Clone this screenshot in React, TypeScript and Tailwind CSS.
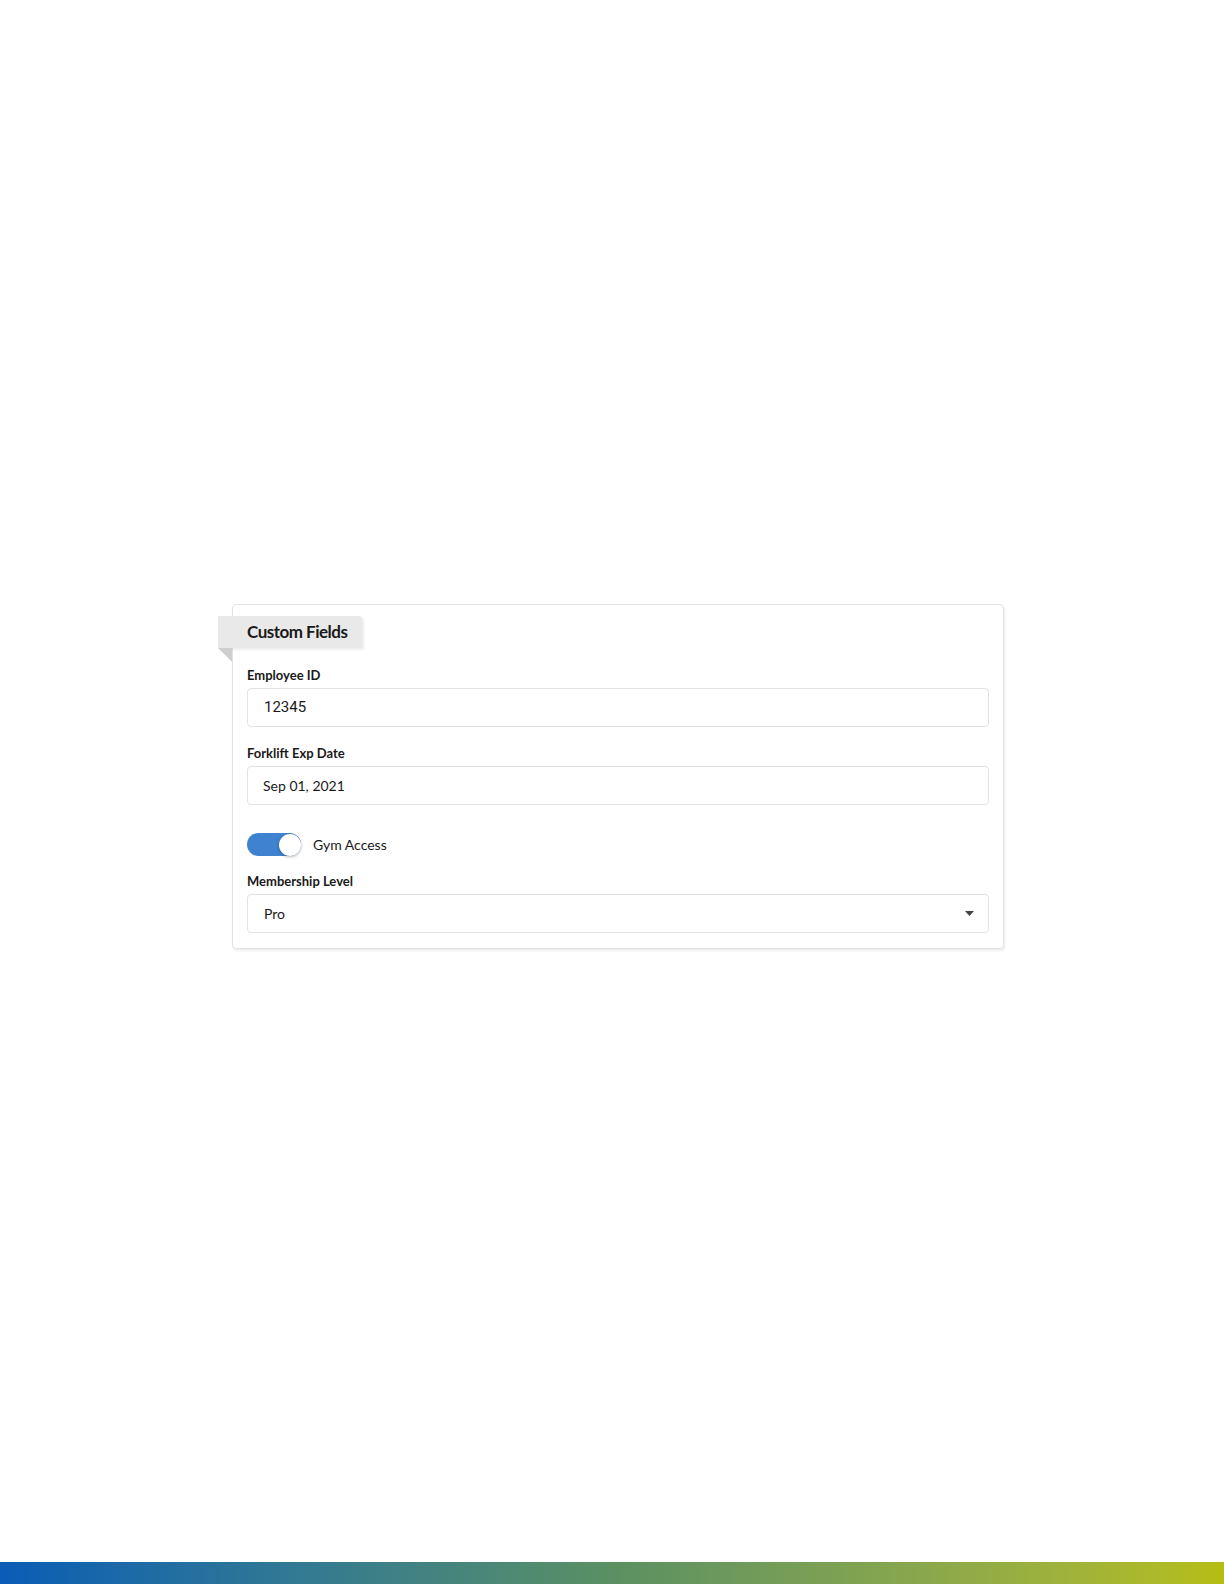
const font = { fontFamily: 'Lato, "Noto Sans", sans-serif' };

function Field({ label, children }: { label: string; children: React.ReactNode }) {
  return (
    <div className="flex flex-col">
      <label className="text-[13px] leading-[16px] font-bold text-[#1a1a1a] mb-[5px]">{label}</label>
      {children}
    </div>
  );
}

export default function App() {
  return (
    <div className="flex flex-col h-[1584px] bg-white" style={font}>
      <div className="mt-[604px] ml-[232px] w-[772px] h-[345px] rounded-[4px] border border-[#e2e2e2] bg-white shadow-[1px_2px_3px_rgba(0,0,0,0.08)] px-[14px] pt-[11px] pb-[15px]">
        <div className="relative -ml-[29px] w-[144px] h-[32px] pl-[29px] flex items-center bg-[#e9e9e9] rounded-r-[3px] shadow-[2px_2px_3px_rgba(0,0,0,0.08)]">
          <span className="text-[17px] font-bold text-[#1a1a1a] tracking-[-0.5px]">Custom Fields</span>
          <div className="absolute left-0 top-[32px] w-0 h-0 border-t-[14px] border-t-[#cfcfcf] border-l-[14px] border-l-transparent" />
        </div>

        <div className="mt-[19px] flex flex-col">
          <Field label="Employee ID">
            <div className="h-[39px] rounded-[4px] border border-[#e3e3e3] flex items-center pl-[16px] text-[15px] text-[#1a1a1a]" style={{ fontFamily: 'Roboto, sans-serif' }}>
              12345
            </div>
          </Field>

          <div className="mt-[18px]">
            <Field label="Forklift Exp Date">
              <div className="h-[39px] rounded-[4px] border border-[#e3e3e3] flex items-center pl-[15px] text-[14px] text-[#1a1a1a]">
                Sep 01, 2021
              </div>
            </Field>
          </div>

          <div className="mt-[28px] flex items-center h-[23px]">
            <div className="relative w-[54px] h-[23px] rounded-full bg-[#3f82d0]">
              <div className="absolute right-0 top-[0.5px] w-[22px] h-[22px] rounded-full bg-white shadow-[0_1px_3px_rgba(0,0,0,0.3)]" />
            </div>
            <span className="ml-[12px] text-[14px] text-[#1a1a1a]">Gym Access</span>
          </div>

          <div className="mt-[17px]">
            <Field label="Membership Level">
              <div className="h-[39px] rounded-[4px] border border-[#e3e3e3] flex items-center justify-between pl-[16px] pr-[14px] text-[14px] text-[#1a1a1a]">
                <span>Pro</span>
                <svg width="9" height="5" viewBox="0 0 9 5">
                  <path d="M0 0 L9 0 L4.5 5 Z" fill="#444" />
                </svg>
              </div>
            </Field>
          </div>
        </div>
      </div>

      <div className="mt-auto h-[22px] bg-gradient-to-r from-[#0a5cb6] via-[#5a9062] to-[#b6be12]" />
    </div>
  );
}
